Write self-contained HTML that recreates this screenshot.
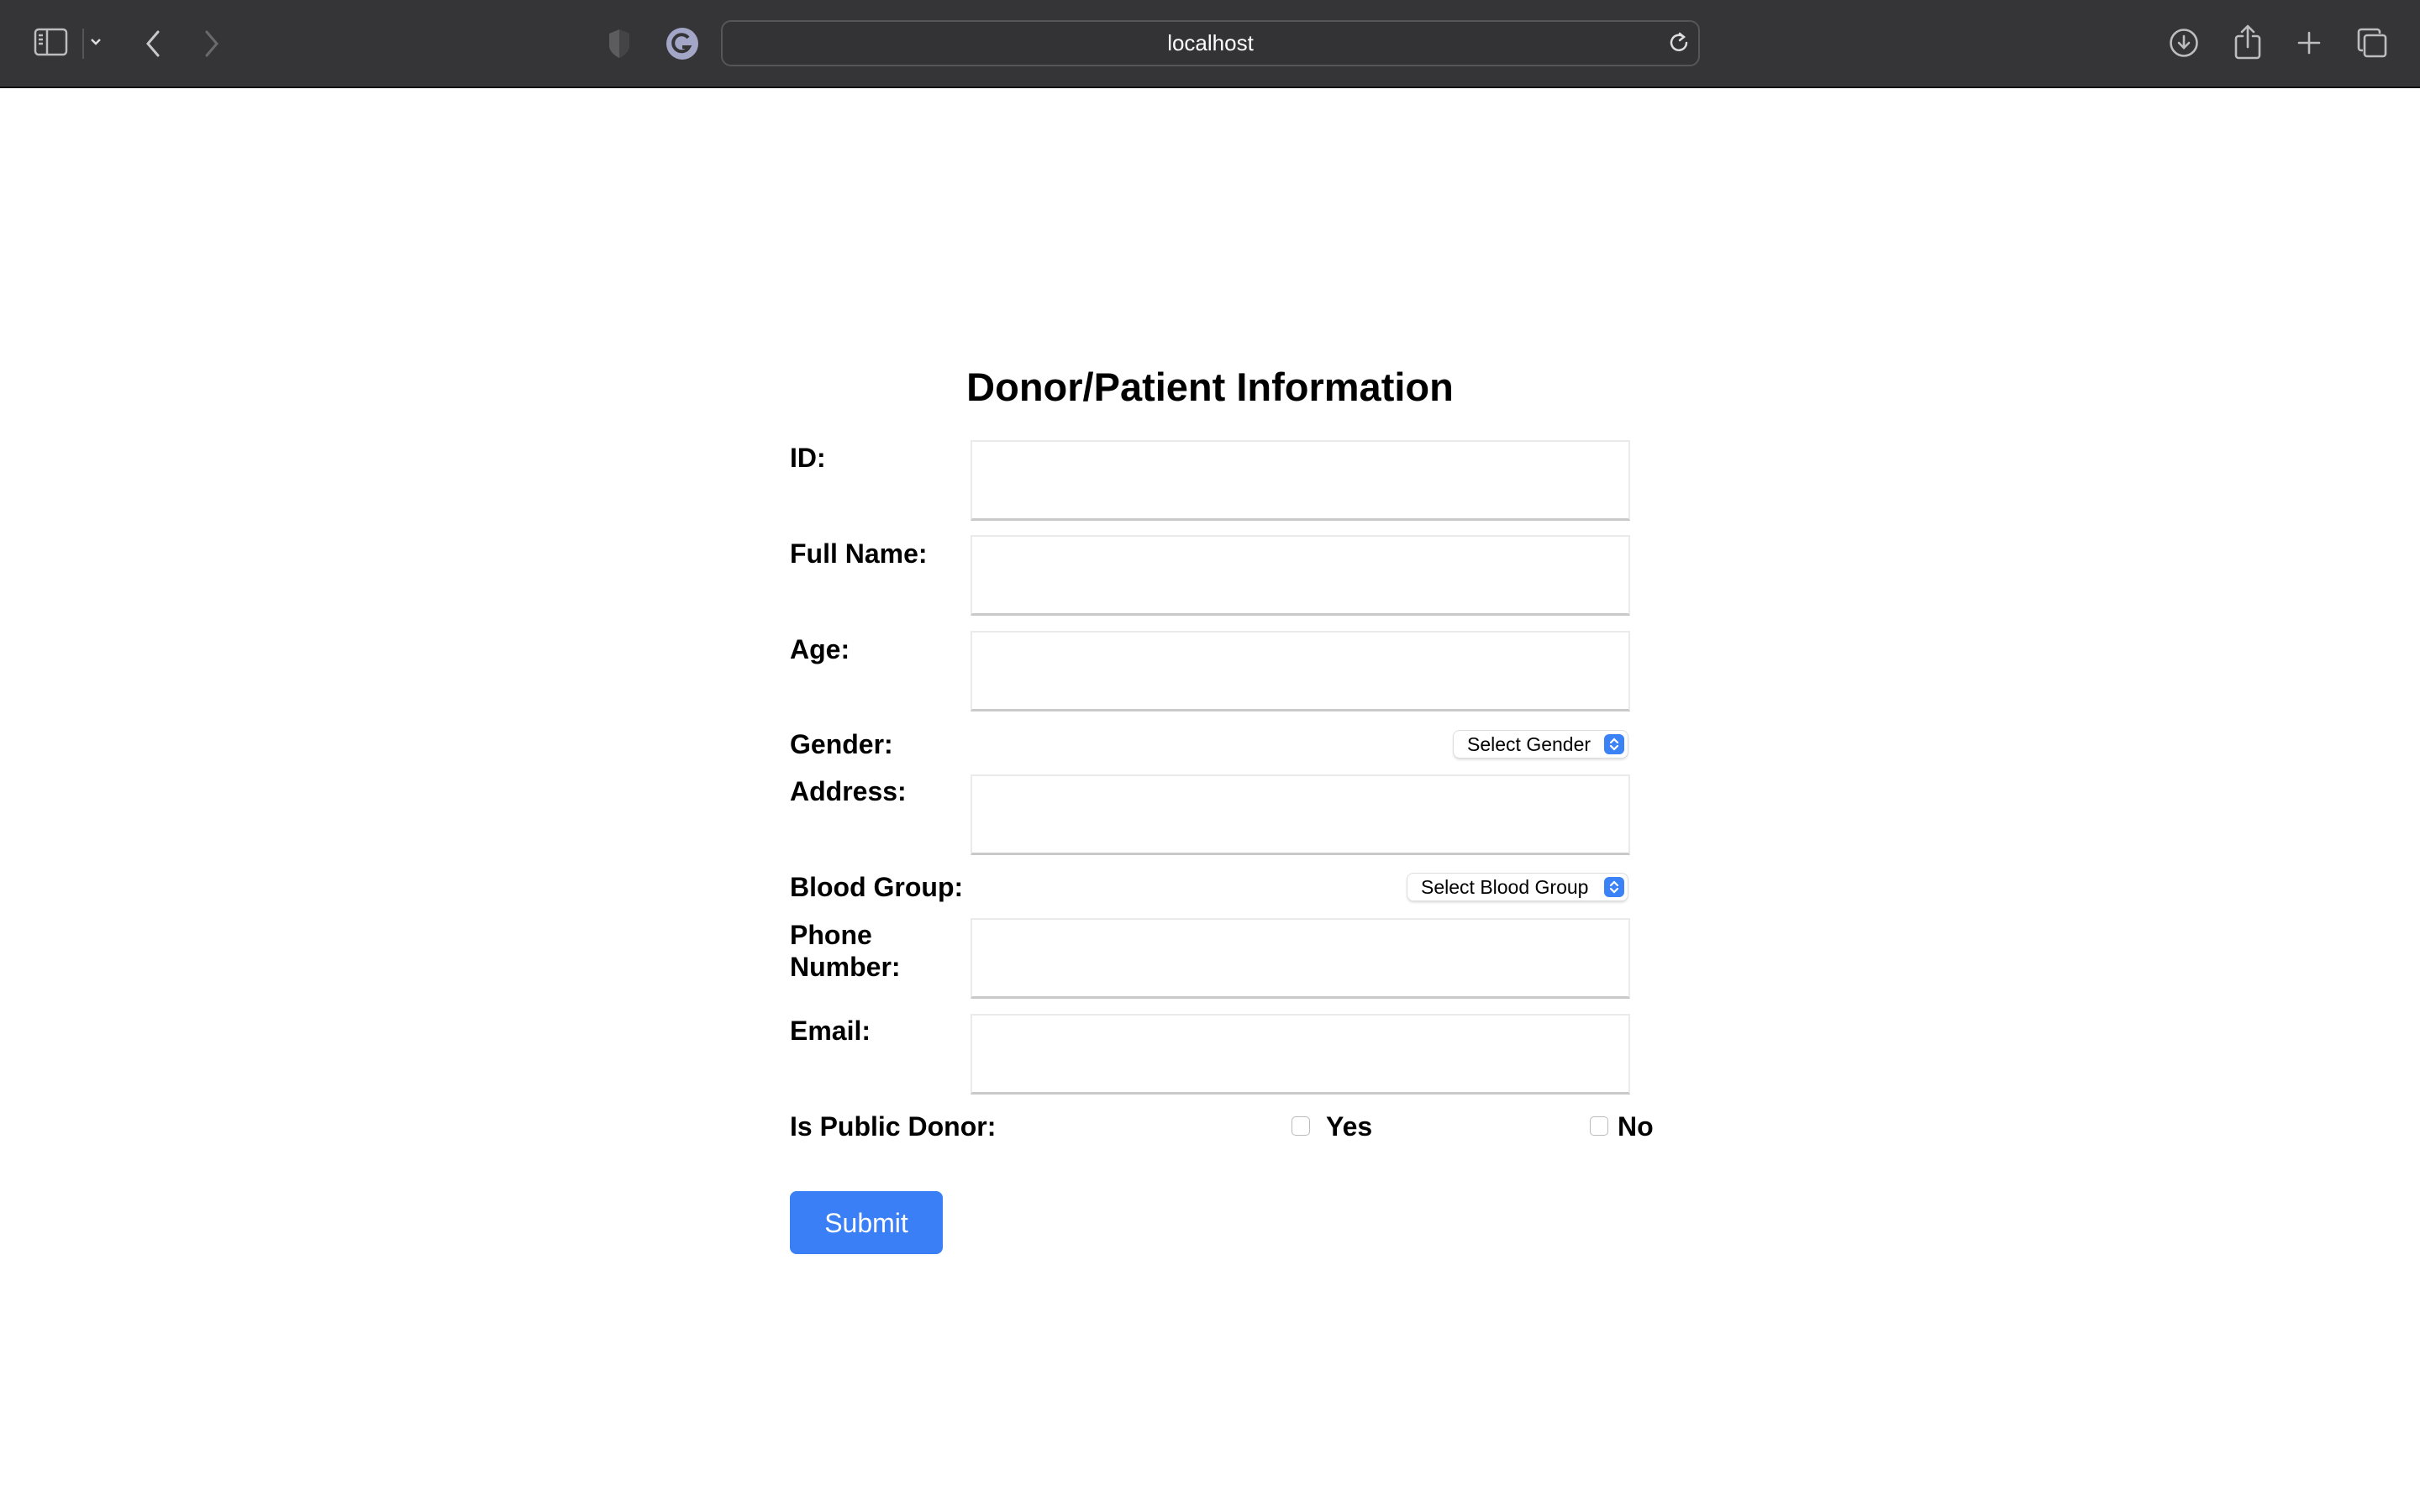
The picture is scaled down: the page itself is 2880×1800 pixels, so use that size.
<!DOCTYPE html>
<html><head><meta charset="utf-8"><style>
*{margin:0;padding:0;box-sizing:border-box}
body{width:2880px;height:1800px;background:#fff;position:relative;overflow:hidden;font-family:"Liberation Sans",Arial,sans-serif;color:#000}
.bar{position:absolute;left:0;top:0;width:2880px;height:105px;background:#353538;border-bottom:2px solid #111}
.url{position:absolute;left:858px;top:24px;width:1165px;height:55px;border:2px solid #55565a;border-radius:12px;background:#333336;color:#fff;font-size:26px;text-align:center;line-height:51px}
.ab{position:absolute}
h2{position:absolute;left:0;width:2880px;top:431px;text-align:center;font-size:47px;font-weight:bold;line-height:60px}
.lbl{position:absolute;left:940px;font-size:32px;font-weight:bold;line-height:38px}
.inp{position:absolute;left:1155px;width:785px;height:96px;border:2px solid #eaeaea;border-bottom:3px solid #c9c9c9;background:#fff}
.sel{position:absolute;height:32px;border-radius:7px;background:#fff;box-shadow:0 0 0 1px #ddd,0 2px 3px rgba(0,0,0,.18);font-size:23px;line-height:32px;padding-left:16px}
.sel .ar{position:absolute;right:4px;top:4px;width:24px;height:24px;border-radius:6px;background:#3b82f6}
.cb{position:absolute;width:22px;height:23px;border:1.5px solid #bbb;border-radius:5px;background:#fff}
.btn{position:absolute;left:940px;top:1418px;width:182px;height:75px;background:#3a7ff6;border-radius:8px;color:#fff;font-size:32px;text-align:center;line-height:77px}
</style></head><body>
<div class="bar">
 <svg class="ab" style="left:40px;top:32px" width="42" height="36" viewBox="0 0 42 36" fill="none" stroke="#bdbdbd" stroke-width="2.5"><rect x="2" y="3" width="37" height="30" rx="4"/><line x1="16" y1="3" x2="16" y2="33"/><line x1="6" y1="10" x2="11" y2="10"/><line x1="6" y1="15" x2="11" y2="15"/><line x1="6" y1="20" x2="11" y2="20"/></svg>
 <div class="ab" style="left:98px;top:34px;width:2px;height:36px;background:#555"></div>
 <svg class="ab" style="left:106px;top:44px" width="16" height="12" viewBox="0 0 16 12" fill="none" stroke="#ddd" stroke-width="2.5"><path d="M3 3l5 5 5-5"/></svg>
 <svg class="ab" style="left:170px;top:34px" width="24" height="36" viewBox="0 0 24 36" fill="none" stroke="#c8c8c8" stroke-width="3" stroke-linecap="round"><path d="M18 4L6 18l12 14"/></svg>
 <svg class="ab" style="left:240px;top:34px" width="24" height="36" viewBox="0 0 24 36" fill="none" stroke="#6a6a6c" stroke-width="3" stroke-linecap="round"><path d="M6 4l12 14L6 32"/></svg>
 <svg class="ab" style="left:722px;top:33px" width="30" height="38" viewBox="0 0 30 38"><path d="M15 2L27 7v14c0 7-6 12-12 15C9 33 3 28 3 21V7z" fill="#5c5c5e"/><path d="M15 2L27 7v14c0 7-6 12-12 15z" fill="#444446"/></svg>
 <svg class="ab" style="left:792px;top:32px" width="40" height="40" viewBox="0 0 40 40"><circle cx="20" cy="20" r="19" fill="#a3a6c6"/><path d="M27 13a10 10 0 1 0 1 11h-8" fill="none" stroke="#353538" stroke-width="4"/></svg>
 <div class="url">localhost</div>
 <svg class="ab" style="left:1984px;top:36px" width="28" height="28" viewBox="0 0 28 28" fill="none" stroke="#ddd" stroke-width="2.5" stroke-linecap="round"><path d="M20 8a9 9 0 1 0 3 7"/><path d="M15 4l5 4-5 4"/></svg>
 <svg class="ab" style="left:2581px;top:33px" width="36" height="36" viewBox="0 0 36 36" fill="none" stroke="#bdbdbd" stroke-width="2.6" stroke-linecap="round"><circle cx="18" cy="18" r="15.5"/><path d="M18 10v14M12 18l6 6 6-6"/></svg>
 <svg class="ab" style="left:2658px;top:28px" width="34" height="44" viewBox="0 0 34 44" fill="none" stroke="#bdbdbd" stroke-width="2.6" stroke-linecap="round" stroke-linejoin="round"><path d="M11 15H6a3 3 0 0 0-3 3v20a3 3 0 0 0 3 3h22a3 3 0 0 0 3-3V18a3 3 0 0 0-3-3h-5"/><path d="M17 28V3M10 10l7-7 7 7"/></svg>
 <svg class="ab" style="left:2734px;top:37px" width="28" height="28" viewBox="0 0 28 28" stroke="#bdbdbd" stroke-width="2.6" stroke-linecap="round"><path d="M14 2v24M2 14h24"/></svg>
 <svg class="ab" style="left:2804px;top:32px" width="38" height="38" viewBox="0 0 38 38" fill="none" stroke="#bdbdbd" stroke-width="2.6"><path d="M8 28H6a3 3 0 0 1-3-3V6a3 3 0 0 1 3-3h19a3 3 0 0 1 3 3v2"/><rect x="10" y="10" width="25" height="25" rx="3"/></svg>
</div>

<h2>Donor/Patient Information</h2>

<div class="lbl" style="top:526px">ID:</div>
<div class="inp" style="top:524px"></div>
<div class="lbl" style="top:640px">Full Name:</div>
<div class="inp" style="top:637px"></div>
<div class="lbl" style="top:754px">Age:</div>
<div class="inp" style="top:751px"></div>
<div class="lbl" style="top:867px">Gender:</div>
<div class="sel" style="left:1730px;top:870px;width:207px">Select Gender<span class="ar"><svg width="24" height="24" viewBox="0 0 24 24" fill="none" stroke="#fff" stroke-width="2.2" stroke-linecap="round"><path d="M8 10l4-4 4 4M8 14l4 4 4-4"/></svg></span></div>
<div class="lbl" style="top:923px">Address:</div>
<div class="inp" style="top:922px"></div>
<div class="lbl" style="top:1037px">Blood Group:</div>
<div class="sel" style="left:1675px;top:1040px;width:262px">Select Blood Group<span class="ar"><svg width="24" height="24" viewBox="0 0 24 24" fill="none" stroke="#fff" stroke-width="2.2" stroke-linecap="round"><path d="M8 10l4-4 4 4M8 14l4 4 4-4"/></svg></span></div>
<div class="lbl" style="top:1094px">Phone<br>Number:</div>
<div class="inp" style="top:1093px"></div>
<div class="lbl" style="top:1208px">Email:</div>
<div class="inp" style="top:1207px"></div>
<div class="lbl" style="top:1322px">Is Public Donor:</div>
<div class="cb" style="left:1537px;top:1329px"></div>
<div class="lbl" style="left:1578px;top:1322px">Yes</div>
<div class="cb" style="left:1892px;top:1329px"></div>
<div class="lbl" style="left:1925px;top:1322px">No</div>
<div class="btn">Submit</div>
</body></html>
